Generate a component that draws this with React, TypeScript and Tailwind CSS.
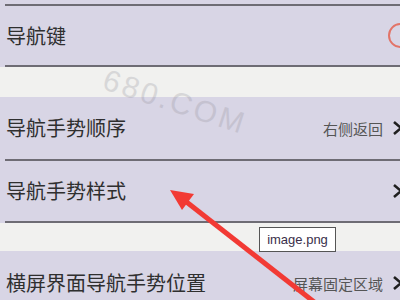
import React from "react";

const cjk = { fontFamily: '"Noto Sans CJK SC", "Noto Sans", sans-serif' };
const latin = { fontFamily: '"Liberation Sans", sans-serif' };

function Chevron() {
  return (
    <svg width="14" height="16" viewBox="0 0 14 16" className="shrink-0 -mr-[6px]">
      <polyline points="2,2 9,8 2,14" fill="none" stroke="#1f1f1f" strokeWidth="2.6" strokeLinejoin="miter" />
    </svg>
  );
}

function Divider() {
  return <div className="ml-[5px] h-[2px] bg-[#6e6c74]" />;
}

function Row({ label, value, h }: { label: string; value?: string; h: string }) {
  return (
    <div className={`flex items-center justify-between pl-[6px] ${h}`}>
      <span className="text-[20px] leading-none text-[#2f2f2f]">{label}</span>
      <div className="flex items-center gap-[9px]">
        {value && <span className="text-[15px] leading-none text-[#555]">{value}</span>}
        <Chevron />
      </div>
    </div>
  );
}

export default function App() {
  return (
    <div className="relative w-[400px] h-[300px] overflow-hidden bg-[#f1f1ef]" style={cjk}>
      {/* section 1 */}
      <div className="bg-[#d8d5e5]">
        <div className="h-[4px]" />
        <Divider />
        <div className="flex items-center justify-between pl-[6px] h-[59px]">
          <span className="text-[20px] leading-none text-[#2f2f2f]">导航键</span>
          <div className="w-[25px] h-[25px] rounded-full border-2 border-[#e27468] -mr-[13px] shrink-0" />
        </div>
        <Divider />
      </div>

      <div className="h-[30px]" />

      {/* section 2 */}
      <div className="bg-[#d8d5e5]">
        <Row label="导航手势顺序" value="右侧返回" h="h-[62px]" />
        <Divider />
        <Row label="导航手势样式" h="h-[60px]" />
        <Divider />
      </div>

      <div className="h-[28px]" />

      {/* section 3 */}
      <div className="bg-[#d8d5e5]">
        <Row label="横屏界面导航手势位置" value="屏幕固定区域" h="h-[64px]" />
      </div>

      <span
        className="absolute left-[104px] top-[64px] text-[30px] leading-none text-[#8e8c96] opacity-25 rotate-[18deg] origin-left tracking-[3px] pointer-events-none"
        style={latin}
      >
        680
      </span>
      <span
        className="absolute left-[160px] top-[82px] text-[30px] leading-none text-[#8e8c96] opacity-25 rotate-[18deg] origin-left tracking-[3px] pointer-events-none"
        style={latin}
      >
        .COM
      </span>

      {/* red arrow */}
      <svg className="absolute left-0 top-0" width="400" height="300" viewBox="0 0 400 300">
        <line x1="184" y1="200" x2="318" y2="305" stroke="#f23a34" strokeWidth="5" />
        <polygon points="170,190 194,194 182,210" fill="#f23a34" />
      </svg>

      {/* tooltip */}
      <div
        className="absolute left-[259px] top-[227px] w-[77px] h-[25px] bg-white border border-[#555] flex items-center justify-center text-[13px] text-[#3a2f4a]"
        style={latin}
      >
        image.png
      </div>
    </div>
  );
}
